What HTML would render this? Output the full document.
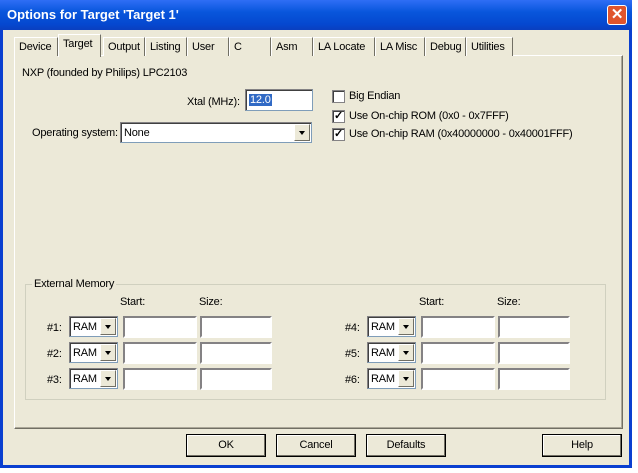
<!DOCTYPE html>
<html><head><style>
*{box-sizing:border-box}
body{margin:0;width:638px;height:473px;background:#fff;position:relative;overflow:hidden;font-family:"Liberation Sans",sans-serif;font-size:11px;color:#000;letter-spacing:-0.2px}
.a{position:absolute}
#win{left:0;top:0;width:632px;height:468px;background:#0a3fd0;}
#title{left:0;top:0;width:632px;height:30px;background:linear-gradient(#2f6ef5,#0856dc 40%,#0548d0 80%,#0a3fbf);color:#fff;font-weight:bold;font-size:13px;padding:7px 0 0 7px;letter-spacing:0}
#body{left:3px;top:30px;width:626px;height:435px;background:#ece9d8}
.close{left:607px;top:5px;width:20px;height:20px;background:#e0542c;border:1px solid #fff;border-radius:3px;color:#fff;font-size:15px;text-align:center;line-height:17px;font-weight:bold}
.panel{left:14px;top:55px;width:609px;height:374px;border:1px solid #fff;border-right-color:#716f64;border-bottom-color:#716f64;box-shadow:inset -1px -1px 0 #aca899}
.tab{top:37px;height:19px;border:1px solid #fff;border-bottom:none;border-right:1px solid #716f64;padding:3px 0 0 4px;background:#ece9d8}
.sel{top:34px;height:23px;border-bottom:none;z-index:2;padding-top:3px}
.edit{background:#fff;border:1px solid #7f9db9;border-top-color:#848284;border-left-color:#848284;box-shadow:inset 1px 1px 0 #404040}
.ed2{background:#fff;border:2px solid;border-color:#848284 #fff #fff #848284}
.btn{height:23px;border:1px solid #000;background:#ece9d8;text-align:center;line-height:21px;box-shadow:inset -1px -1px 0 #716f64,inset 1px 1px 0 #fff}
.dd{width:16px;height:16px;background:#ece9d8;border:1px solid;border-color:#fff #716f64 #716f64 #fff}
.dd:after{content:"";position:absolute;left:4px;top:6px;border:3px solid transparent;border-top:4px solid #000}
.cb{width:13px;height:13px;background:#fff;border:1px solid #848284;box-shadow:inset 1px 1px 0 #404040;font-size:11px;line-height:11px;text-align:center;font-weight:bold}
</style></head><body>
<div class="a" id="win"></div>
<div class="a" id="title">Options for Target 'Target 1'</div>
<div class="a close">✕</div>
<div class="a" id="body"></div>
<div class="a panel"></div>
<div class="a tab" style="left:14px;width:44px">Device</div>
<div class="a tab sel" style="left:58px;width:43px">Target</div>
<div class="a tab" style="left:103px;width:42px">Output</div>
<div class="a tab" style="left:145px;width:42px">Listing</div>
<div class="a tab" style="left:187px;width:42px">User</div>
<div class="a tab" style="left:229px;width:42px">C</div>
<div class="a tab" style="left:271px;width:42px">Asm</div>
<div class="a tab" style="left:313px;width:62px">LA Locate</div>
<div class="a tab" style="left:375px;width:50px">LA Misc</div>
<div class="a tab" style="left:425px;width:41px">Debug</div>
<div class="a tab" style="left:466px;width:47px">Utilities</div>

<div class="a" style="left:22px;top:67px">NXP (founded by Philips) LPC2103</div>
<div class="a" style="left:187px;top:96px">Xtal (MHz):</div>
<div class="a edit" style="left:245px;top:89px;width:68px;height:22px"><span class="a" style="left:3px;top:4px;background:#316ac5;color:#fff;padding:0 1px">12.0</span></div>
<div class="a" style="left:32px;top:127px">Operating system:</div>
<div class="a edit" style="left:120px;top:122px;width:192px;height:21px"><span class="a" style="left:3px;top:4px">None</span><div class="a dd" style="right:1px;top:1px;height:17px"></div></div>

<div class="a cb" style="left:332px;top:90px"></div><div class="a" style="left:349px;top:90px">Big Endian</div>
<div class="a cb" style="left:332px;top:110px">✓</div><div class="a" style="left:349px;top:110px">Use On-chip ROM (0x0 - 0x7FFF)</div>
<div class="a cb" style="left:332px;top:128px">✓</div><div class="a" style="left:349px;top:128px">Use On-chip RAM (0x40000000 - 0x40001FFF)</div>

<div class="a" style="left:25px;top:284px;width:581px;height:116px;border:1px solid #d0d0bf"></div>
<div class="a" style="left:32px;top:278px;background:#ece9d8;padding:0 2px">External Memory</div>
<div class="a" style="left:120px;top:296px">Start:</div><div class="a" style="left:199px;top:296px">Size:</div>
<div class="a" style="left:419px;top:296px">Start:</div><div class="a" style="left:497px;top:296px">Size:</div>

<div class="a" style="left:47px;top:322px">#1:</div>
<div class="a" style="left:47px;top:348px">#2:</div>
<div class="a" style="left:47px;top:374px">#3:</div>
<div class="a" style="left:345px;top:322px">#4:</div>
<div class="a" style="left:345px;top:348px">#5:</div>
<div class="a" style="left:345px;top:374px">#6:</div>

<div id="rows"></div>
<script>
var h='';
[[69,123,200],[367,421,498]].forEach(function(c){[316,342,368].forEach(function(y){
h+='<div class="a edit" style="left:'+c[0]+'px;top:'+y+'px;width:49px;height:21px"><span class="a" style="left:3px;top:4px">RAM</span><div class="a dd" style="right:1px;top:1px;height:17px"></div></div>';
h+='<div class="a ed2" style="left:'+c[1]+'px;top:'+y+'px;width:74px;height:22px"></div>';
h+='<div class="a ed2" style="left:'+c[2]+'px;top:'+y+'px;width:72px;height:22px"></div>';
});});
document.getElementById('rows').innerHTML=h;
</script>

<div class="a btn" style="left:186px;top:434px;width:80px">OK</div>
<div class="a btn" style="left:276px;top:434px;width:80px">Cancel</div>
<div class="a btn" style="left:366px;top:434px;width:80px">Defaults</div>
<div class="a btn" style="left:542px;top:434px;width:80px">Help</div>
</body></html>
